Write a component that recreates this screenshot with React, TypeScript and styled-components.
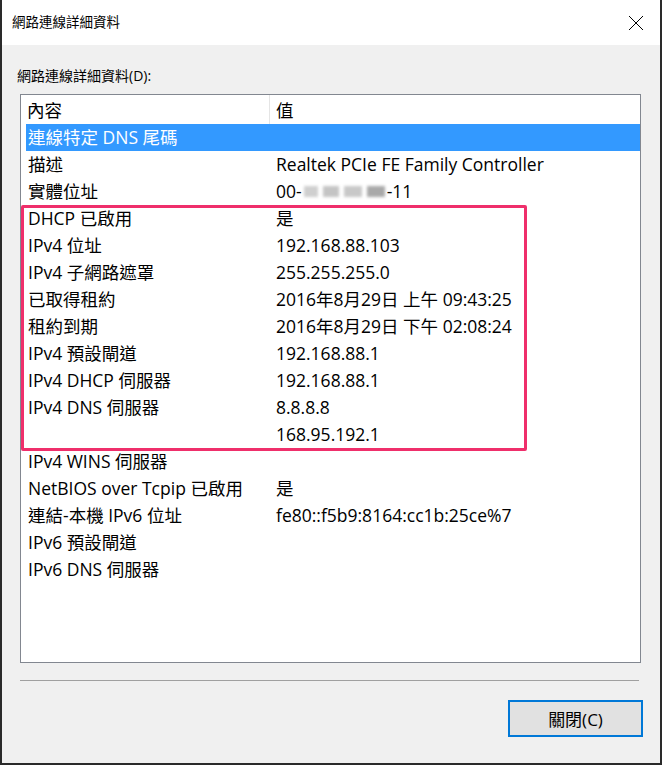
import React from "react";
import styled, { createGlobalStyle } from "styled-components";

const FONT = `"Open Sans", "Noto Sans CJK TC", sans-serif`;

const Global = createGlobalStyle`
  html, body { margin: 0; padding: 0; background: #ffffff; }
  body { font-family: ${FONT}; }
  * { box-sizing: border-box; }
`;

const Window = styled.div`
  width: 662px;
  height: 765px;
  border-left: 2px solid #2a2a2a;
  border-right: 2px solid #2a2a2a;
  border-bottom: 2px solid #2a2a2a;
  display: flex;
  flex-direction: column;
  font-family: ${FONT};
  color: #000;
`;

const TitleBar = styled.div`
  height: 45px;
  background: #ffffff;
  display: flex;
  align-items: center;
  justify-content: space-between;
  padding: 0 16px 0 10px;
`;

const Title = styled.div`
  font-size: 13.5px;
  line-height: 20px;
  margin-top: -1px;
`;

const CloseIcon = styled.svg`
  width: 16px;
  height: 16px;
  display: block;
`;

const Body = styled.div`
  flex: 1;
  background: #f0f0f0;
  display: flex;
  flex-direction: column;
  padding: 21px 17px 0 18px;
`;

const Label = styled.div`
  font-size: 14px;
  line-height: 20px;
  height: 20px;
  margin-left: -3px;
`;

const ListBox = styled.div`
  position: relative;
  margin-top: 8px;
  width: 621px;
  height: 569px;
  background: #ffffff;
  border: 1px solid #828790;
  display: flex;
  flex-direction: column;
  font-size: 17.5px;
`;

const Grid = styled.div`
  display: grid;
  grid-template-columns: 248px 1fr;
  align-items: center;
`;

const Header = styled(Grid)`
  height: 29px;
`;

const HeadCell = styled.div<{ $divider?: boolean }>`
  height: 100%;
  display: flex;
  align-items: center;
  padding-left: 6px;
  border-left: ${(p) => (p.$divider ? "1px solid #e5e5e5" : "none")};
  white-space: nowrap;
`;

const Row = styled(Grid)<{ $selected?: boolean }>`
  height: 27px;
  margin-left: 5px;
  grid-template-columns: 243px 1fr;
  background: ${(p) => (p.$selected ? "#3399ff" : "transparent")};
  color: ${(p) => (p.$selected ? "#ffffff" : "#000000")};
`;

const Cell = styled.div<{ $value?: boolean }>`
  padding-left: ${(p) => (p.$value ? "7px" : "2px")};
  white-space: nowrap;
  line-height: 27px;
  display: flex;
  align-items: center;
`;

const Highlight = styled.div`
  position: absolute;
  left: 0px;
  top: 110px;
  width: 506px;
  height: 246px;
  border: 3px solid #ef2f6b;
  border-radius: 2px;
  pointer-events: none;
`;

const Blurred = styled.span`
  display: inline-flex;
  align-items: center;
  gap: 5px;
  height: 14px;
  margin: 0 2px;
  filter: blur(1.6px);
`;

const Blob = styled.span<{ $w: number; $c: string }>`
  display: inline-block;
  width: ${(p) => p.$w}px;
  height: 11px;
  background: ${(p) => p.$c};
`;

const Separator = styled.div`
  margin-top: 17px;
  width: 619px;
  border-top: 1px solid #a0a0a0;
`;

const Footer = styled.div`
  display: flex;
  justify-content: flex-end;
  margin-top: 19px;
`;

const Button = styled.button`
  width: 135px;
  height: 37px;
  background: #e1e1e1;
  border: 2px solid #0078d7;
  font-family: ${FONT};
  font-size: 17px;
  color: #000;
  padding: 0;
  display: flex;
  align-items: center;
  justify-content: center;
`;

type Item = { k: string; v: React.ReactNode; selected?: boolean };

const Mac = () => (
  <>
    00-
    <Blurred>
      <Blob $w={14} $c="#cfcfcf" />
      <Blob $w={16} $c="#c4c4c4" />
      <Blob $w={18} $c="#c8c8c8" />
      <Blob $w={18} $c="#a9a9a9" />
    </Blurred>
    -11
  </>
);

const items: Item[] = [
  { k: "連線特定 DNS 尾碼", v: "", selected: true },
  { k: "描述", v: "Realtek PCIe FE Family Controller" },
  { k: "實體位址", v: <Mac /> },
  { k: "DHCP 已啟用", v: "是" },
  { k: "IPv4 位址", v: "192.168.88.103" },
  { k: "IPv4 子網路遮罩", v: "255.255.255.0" },
  { k: "已取得租約", v: "2016年8月29日 上午 09:43:25" },
  { k: "租約到期", v: "2016年8月29日 下午 02:08:24" },
  { k: "IPv4 預設閘道", v: "192.168.88.1" },
  { k: "IPv4 DHCP 伺服器", v: "192.168.88.1" },
  { k: "IPv4 DNS 伺服器", v: "8.8.8.8" },
  { k: "", v: "168.95.192.1" },
  { k: "IPv4 WINS 伺服器", v: "" },
  { k: "NetBIOS over Tcpip 已啟用", v: "是" },
  { k: "連結-本機 IPv6 位址", v: "fe80::f5b9:8164:cc1b:25ce%7" },
  { k: "IPv6 預設閘道", v: "" },
  { k: "IPv6 DNS 伺服器", v: "" },
];

export default function App() {
  return (
    <>
      <Global />
      <Window>
        <TitleBar>
          <Title>網路連線詳細資料</Title>
          <CloseIcon viewBox="0 0 16 16">
            <path d="M1 1 L15 15 M15 1 L1 15" stroke="#000" strokeWidth="1" fill="none" />
          </CloseIcon>
        </TitleBar>
        <Body>
          <Label>網路連線詳細資料(D):</Label>
          <ListBox>
            <Header>
              <HeadCell>內容</HeadCell>
              <HeadCell $divider>值</HeadCell>
            </Header>
            {items.map((it, i) => (
              <Row key={i} $selected={it.selected}>
                <Cell>{it.k}</Cell>
                <Cell $value>{it.v}</Cell>
              </Row>
            ))}
            <Highlight />
          </ListBox>
          <Separator />
          <Footer>
            <Button>關閉(C)</Button>
          </Footer>
        </Body>
      </Window>
    </>
  );
}
